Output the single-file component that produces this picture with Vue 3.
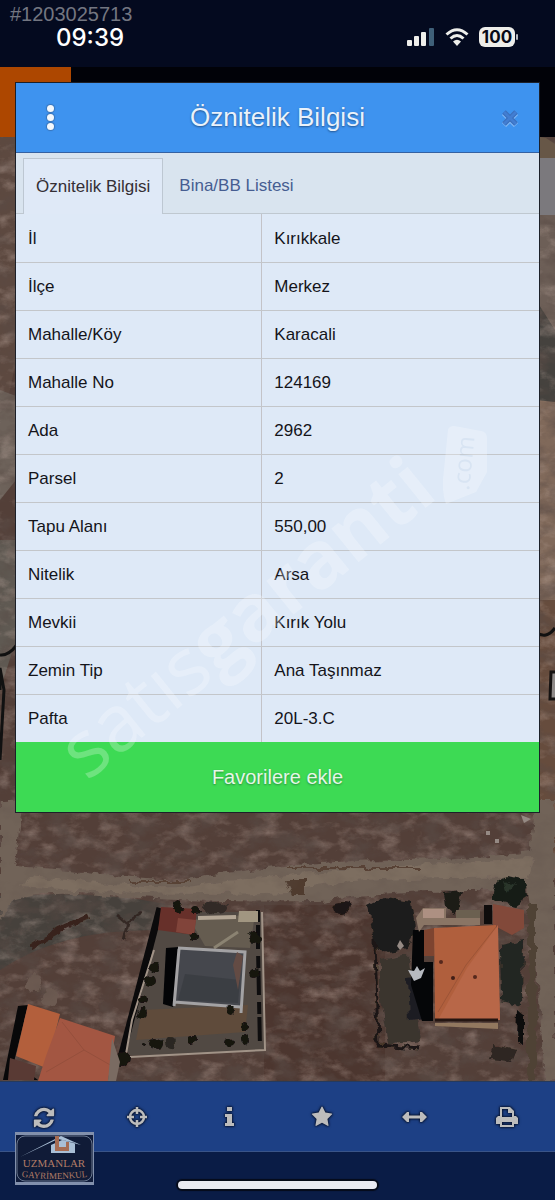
<template>
  <div class="screen">
    <header class="status-bar">
      <div class="status-left">
        <span class="listing-no">#1203025713</span>
        <span class="clock">09:39</span>
      </div>
      <div class="status-icons">
        <svg class="signal" viewBox="0 0 28 18" aria-hidden="true">
          <rect x="0" y="12" width="5" height="6" rx="1" />
          <rect x="7" y="8" width="5" height="10" rx="1" />
          <rect x="14" y="4" width="5" height="14" rx="1" />
          <rect x="22" y="0" width="5" height="18" rx="1" fill="#3f6079" />
        </svg>
        <svg class="wifi" viewBox="0 0 24 18" aria-hidden="true">
          <path d="M1.500 6.500Q12-3 22.500 6.500M5.500 10.500Q12 4.500 18.500 10.500" fill="none" stroke="#eeeeea" stroke-width="3" />
          <path d="M8 13.500Q12 10 16 13.500L12 18Z" />
        </svg>
        <span class="battery">100</span>
      </div>
    </header>
    <div class="app-strip"><div class="brand"></div></div>

    <main class="map">
      <svg class="aerial" viewBox="0 137 555 944" preserveAspectRatio="xMidYMax slice" aria-hidden="true">
        <defs>
          <filter id="dark-grain" x="0" y="0" width="100%" height="100%">
            <feTurbulence type="fractalNoise" baseFrequency="0.04 0.06" numOctaves="5" seed="7" />
            <feColorMatrix values="0 0 0 0 0.1  0 0 0 0 0.07  0 0 0 0 0.06  2.6 0 0 0 -1.1" />
          </filter>
          <filter id="light-grain" x="0" y="0" width="100%" height="100%">
            <feTurbulence type="fractalNoise" baseFrequency="0.05 0.08" numOctaves="5" seed="21" />
            <feColorMatrix values="0 0 0 0 0.54  0 0 0 0 0.42  0 0 0 0 0.37  0 2.4 0 0 -1.1" />
          </filter>
          <filter id="rough" x="-10%" y="-10%" width="120%" height="120%">
            <feTurbulence type="fractalNoise" baseFrequency="0.09" numOctaves="3" seed="3" />
            <feDisplacementMap in="SourceGraphic" scale="9" xChannelSelector="R" yChannelSelector="G" />
          </filter>
        </defs>
        <rect y="137" width="555" height="944" fill="#533f38" />
        <path d="M0 137H16V360L0 440Z" fill="#5d4940" />
        <path d="M0 390L16 396V480L0 500Z" fill="#6d625a" />
        <path d="M0 540H16V640L0 690Z" fill="#5f5952" />
        <path d="M536 210H555V350L536 300Z" fill="#6d5f57" />
        <path d="M536 300L555 330V400L536 430Z" fill="#45423e" />
        <path d="M536 400L555 402V600H536Z" fill="#80695a" />
        <path d="M536 600H555V880H536Z" fill="#664c3d" />
        <path d="M0 896Q100 890 165 904L152 930Q60 930 0 970Z" fill="#46413c" />
        <path d="M264 905H385V1081H264Z" fill="#4c362f" />
        <rect y="137" width="555" height="944" filter="url(#light-grain)" opacity=".42" />
        <rect y="137" width="555" height="944" filter="url(#dark-grain)" opacity=".6" />

        <g filter="url(#rough)">
          <path d="M0 800H24L14 866L70 870Q130 878 180 880Q300 860 400 860Q480 858 530 852L536 800H555V1081H545L536 960L528 890Q400 888 320 901Q190 903 110 896Q40 890 14 900L0 920Z" fill="#716359" />
          <path d="M30 876Q130 888 185 886Q330 868 535 858L528 878Q340 876 290 892Q160 898 20 886Z" fill="#7d6e60" />
          <path d="M285 868H420M130 881H190" stroke="#594235" stroke-width="2" />
          <path d="M285 880H305V895H292Z" fill="#4f3b2f" />
          <path d="M30 948Q60 928 90 916" fill="none" stroke="#38241b" stroke-width="6" />
          <path d="M116 915L126 923L142 913M128 923L123 940" fill="none" stroke="#332824" stroke-width="3" />
        </g>
        <g fill="#6c5a51" filter="url(#rough)">
          <circle cx="34" cy="983" r="8" />
          <circle cx="50" cy="998" r="8" />
        </g>
        <rect y="800" width="555" height="281" filter="url(#dark-grain)" opacity=".2" />

        <!-- walled garden with the grey roof -->
        <path d="M159 912L262 912L266 1051L121 1056Z" fill="#514943" />
        <path d="M190 920L255 914L250 948L205 946Z" fill="#655c50" />
        <path d="M142 1010L248 1005L245 1032L136 1040Z" fill="#5f4b3b" />
        <path d="M160 908L122 1054" stroke="#0b0a0b" stroke-width="7" fill="none" />
        <path d="M154 950L132 1020L126 1054M130 1057L265 1050L262 912" stroke="#a19387" stroke-width="2" fill="none" />
        <path d="M258 910V948L260 1048" stroke="#0e0d0e" stroke-width="4" fill="none" stroke-dasharray="12 3 24 7" />
        <path d="M161 907L197 909L194 935L158 930Z" fill="#67302a" />
        <path d="M178 918L196 920L194 935L176 932Z" fill="#81443a" />
        <path d="M198 918L236 917" stroke="#b3a695" stroke-width="4" />
        <path d="M239 911H258V922H238Z" fill="#a19681" />
        <path d="M214 948L238 932" stroke="#8b8372" stroke-width="3" />
        <path d="M166 948L179 947L173 1007L163 1004Z" fill="#030406" />
        <path d="M179 949L245 952L240 1006L174 1002Z" fill="#45474d" />
        <path d="M185 974L240 980L238 1003L178 1000Z" fill="#36383d" opacity=".6" />
        <path d="M178 948L245 952L241 1013M179 949L174 1006M174 1002L241 1007" stroke="#a3a2a4" stroke-width="3" fill="none" />
        <path d="M237 952L243 956L238 990L233 965Z" fill="#634b44" />
        <g fill="#15130f" filter="url(#rough)">
          <circle cx="154" cy="968" r="5" />
          <circle cx="150" cy="981" r="6" />
          <circle cx="144" cy="999" r="4" />
          <circle cx="142" cy="1013" r="5" />
          <circle cx="193" cy="937" r="4" />
          <circle cx="178" cy="907" r="6" />
          <circle cx="196" cy="910" r="4" />
          <ellipse cx="216" cy="908" rx="13" ry="6" fill="#302a25" />
          <circle cx="254" cy="937" r="6" />
          <circle cx="254" cy="973" r="5" />
          <circle cx="246" cy="1026" r="4" />
          <circle cx="245" cy="1040" r="5" />
          <circle cx="230" cy="1042" r="5" />
          <circle cx="156" cy="1044" r="6" />
          <circle cx="170" cy="1043" r="5" fill="#2c2820" />
          <circle cx="191" cy="1040" r="4" />
          <circle cx="144" cy="1045" r="3" />
          <circle cx="230" cy="1011" r="5" />
          <circle cx="122" cy="1059" r="7" />
        </g>

        <!-- orange roof, lower left -->
        <path d="M18 1006L28 1005L14 1062L38 1080H3Z" fill="#080809" />
        <path d="M28 1004L60 1014L46 1068L16 1056Z" fill="#b35f3c" />
        <path d="M60 1018L115 1036L108 1081H38L46 1056Z" fill="#a35642" />
        <path d="M46 1072L84 1050L112 1066M84 1050L62 1022" stroke="#954f3c" fill="none" />
        <path d="M10 1058L36 1066L34 1080H8Z" fill="#593a34" />
        <path d="M112 1038L120 1062L116 1081H108Z" fill="#7a6b62" />

        <!-- house on the right and its trees -->
        <g filter="url(#rough)">
          <path d="M368 906L384 898L412 902L416 930L408 948L388 952L376 946L372 925Z" fill="#1c1c1a" />
          <path d="M380 960L408 955L420 1040L388 1045L380 1000Z" fill="#3b342f" />
          <path d="M375 940L378 1045L420 1048" fill="none" stroke="#1f1815" stroke-width="3" />
          <path d="M408 978L420 976L424 1018L410 1020Z" fill="#1c1d24" />
          <ellipse cx="342" cy="908" rx="9" ry="6" fill="#1d1513" />
          <path d="M444 892L462 890L456 916L446 908Z" fill="#1f1b18" />
          <path d="M494 884L508 876L524 880L528 896L514 905L492 900Z" fill="#161b16" />
          <path d="M504 880L514 884L508 894Z" fill="#29352a" />
          <path d="M500 945L523 940L522 1005L501 1000Z" fill="#232521" />
          <path d="M517 1010L523 1015V1045L516 1040Z" fill="#090a0b" />
          <path d="M495 1045L515 1050L510 1062L490 1060Z" fill="#2d2521" />
          <path d="M532 905V1080" stroke="#4f4335" stroke-width="8" />
        </g>
        <path d="M413 930H424V962H433V1021H422L411 985Z" fill="#050608" />
        <path d="M416 918L423 908H446V918H480V925H424L419 932Z" fill="#8a7565" />
        <path d="M423 909H444V918H423Z" fill="#ad9082" />
        <path d="M456 910H480V918H456Z" fill="#6b6050" />
        <path d="M484 905H492V924H484Z" fill="#0f0c0c" />
        <path d="M493 904L524 910V928L512 935L493 925Z" fill="#82493a" />
        <path d="M424 930L434 928V956H424Z" fill="#7e4430" />
        <path d="M434 928L496 925L500 1020L435 1021Z" fill="#b05f3d" />
        <path d="M498 925L500 1020H438L467 968Z" fill="#b86748" />
        <path d="M496 927L466 965L438 1012" stroke="#9c5437" fill="none" />
        <path d="M435 1020H498" stroke="#241511" stroke-width="3" />
        <path d="M435 1023H498V1029L435 1026Z" fill="#92785f" />
        <circle cx="453" cy="978" r="2" fill="#401e17" />
        <circle cx="475" cy="977" r="2" fill="#55281c" />
        <circle cx="441" cy="962" r="2" fill="#55281c" />
        <path d="M408 970L414 971L417 966L420 971L425 968L421 978L414 981Z" fill="#b7bac0" />
        <path d="M397 946L400 940L404 946L400 950ZM486 831H490V835H486ZM495 839H499V843H495ZM521 815L531 819L524 823Z" fill="#958a84" />

        <path d="M536 632Q546 640 555 628M0 655Q8 656 16 646M0 690V668L4 690L0 760" fill="none" stroke="#111" stroke-width="3" />
        <path d="M551 672H558V699H550Z" fill="#8f8a88" stroke="#151211" stroke-width="3" />
        <path d="M540 137L546 138L555 144V158H540Z" fill="#675747" />
        <path d="M540 158H555V215H540Z" fill="#7b797d" />
      </svg>
    </main>

    <nav class="toolbar" aria-label="Harita araçları">
      <button v-for="tool in tools" :key="tool.name" type="button" :aria-label="tool.name">
        <svg :viewBox="tool.box" aria-hidden="true">
          <path v-for="d in tool.fills" :key="d" :d="d" fill="currentColor" fill-rule="evenodd" />
          <path v-for="d in tool.lines" :key="d" :d="d" fill="none" stroke="currentColor" stroke-width="2.500" />
        </svg>
      </button>
    </nav>
    <footer class="home-area">
      <div class="home-indicator"></div>
    </footer>

    <section class="dialog" role="dialog" aria-labelledby="dialog-title">
      <div class="dialog-header">
        <button type="button" class="menu" aria-label="Menü">
          <i></i><i></i><i></i>
        </button>
        <h1 id="dialog-title">Öznitelik Bilgisi</h1>
        <button type="button" class="close" aria-label="Kapat">
          <svg viewBox="0 0 18 18" aria-hidden="true">
            <path d="M3 3L15 15M15 3L3 15" stroke="#7cb5f5" stroke-width="6" transform="translate(0 1)" />
            <path d="M3 3L15 15M15 3L3 15" stroke="#376dbb" stroke-width="5" />
            <path d="M3 3L15 15M15 3L3 15" stroke="#427ed2" stroke-width="3" />
          </svg>
        </button>
      </div>
      <div class="tabs" role="tablist">
        <button
          v-for="(tab, i) in tabs"
          :key="tab"
          type="button"
          role="tab"
          :aria-selected="activeTab === i"
          :class="{ active: activeTab === i }"
          @click="activeTab = i"
        >{{ tab }}</button>
      </div>
      <table>
        <tbody>
          <tr v-for="row in rows" :key="row.label">
            <th scope="row">{{ row.label }}</th>
            <td>{{ row.value }}</td>
          </tr>
        </tbody>
      </table>
      <button type="button" class="favorite">Favorilere ekle</button>

      <svg class="watermark" viewBox="0 0 440 370" aria-hidden="true">
        <g transform="translate(20 360) rotate(-39)" fill="#fff">
          <text class="mark"><tspan>satıs</tspan><tspan class="mark-bold">garanti</tspan></text>
        </g>
        <path d="M352 8Q353 4 358 4L385 9Q391 10 391 16V50L380 70L350 82Q345 68 348 48Z" fill="#fff" transform="translate(29 0)" />
        <text class="mark-com" transform="translate(402 69) rotate(-84)">.com</text>
      </svg>
    </section>

    <svg class="agency" viewBox="0 0 79 53" role="img" aria-label="Uzmanlar Gayrimenkul">
      <rect width="79" height="53" fill="#8290ac" />
      <rect x="1" y="3" width="77" height="47" fill="#101c3b" />
      <rect x="2" y="4" width="75" height="45" rx="8" fill="#101b37" stroke="#69778f" />
      <path d="M5 25L46 4L66 13L47 8L36 13V21H60V11L43 7Z" fill="#a9bed5" />
      <path d="M40 4V19H54V10H51V15H44V4Z" fill="#a66b52" />
      <text x="39" y="35" text-anchor="middle" class="agency-name">UZMANLAR</text>
      <path id="agency-arc" d="M2 44Q39 50 77 44" fill="none" />
      <text class="agency-sub" text-anchor="middle"><textPath href="#agency-arc" startOffset="50%">GAYRİMENKUL</textPath></text>
    </svg>
  </div>
</template>

<script setup>
import { ref } from 'vue';

const activeTab = ref(0);
const tabs = ['Öznitelik Bilgisi', 'Bina/BB Listesi'];

const rows = [
  { label: 'İl', value: 'Kırıkkale' },
  { label: 'İlçe', value: 'Merkez' },
  { label: 'Mahalle/Köy', value: 'Karacali' },
  { label: 'Mahalle No', value: '124169' },
  { label: 'Ada', value: '2962' },
  { label: 'Parsel', value: '2' },
  { label: 'Tapu Alanı', value: '550,00' },
  { label: 'Nitelik', value: 'Arsa' },
  { label: 'Mevkii', value: 'Kırık Yolu' },
  { label: 'Zemin Tip', value: 'Ana Taşınmaz' },
  { label: 'Pafta', value: '20L-3.C' },
];

const tools = [
  {
    name: 'Yenile',
    box: '-64 -128 1664 1664',
    fills: [
      'M1511 928q0 5-1 7-64 268-268 434.500t-478 166.500q-146 0-282.500-55t-243.500-157l-129 129q-19 19-45 19t-45-19-19-45v-448q0-26 19-45t45-19h448q26 0 45 19t19 45-19 45l-137 137q71 66 161 102t187 36q134 0 250-65t186-179q11-17 53-117 8-23 30-23h192q13 0 22.500 9.500t9.500 22.500zm25-800v448q0 26-19 45t-45 19h-448q-26 0-45-19t-19-45 19-45l138-138q-148-137-349-137-134 0-250 65t-186 179q-11 17-53 117-8 23-30 23h-199q-13 0-22.500-9.500t-9.500-22.500v-7q65-268 270-434.500t480-166.500q146 0 284 55.500t245 156.500l130-129q19-19 45-19t45 19 19 45z',
    ],
  },
  {
    name: 'Konum',
    box: '0 0 22 22',
    lines: ['M11 4A7 7 0 1 1 11 18A7 7 0 1 1 11 4M11 1V8M11 14V21M1 11H8M14 11H21'],
  },
  {
    name: 'Bilgi',
    box: '0 0 22 22',
    fills: ['M9 1H14V5H9ZM7 8H14V17H16V20H7V17H9V11H7Z'],
  },
  {
    name: 'Favoriler',
    box: '0 0 1792 1792',
    fills: [
      'M1728 647q0 22-26 48l-363 354 86 500q1 7 1 20 0 21-10.500 35.500t-30.500 14.500q-19 0-40-12l-449-236-449 236q-22 12-40 12-21 0-31.500-14.500t-10.500-35.500q0-6 2-20l86-500-364-354q-25-27-25-48 0-37 56-46l502-73 225-455q19-41 49-41t49 41l225 455 502 73q56 9 56 46z',
    ],
  },
  {
    name: 'Ölçüm',
    box: '0 0 22 22',
    fills: ['M-1 11L4 6H6V9.500H17V6H19L24 11L19 16H17V12.500H6V16H4Z'],
  },
  {
    name: 'Yazdır',
    box: '0 0 22 22',
    fills: ['M4 1H14L18 5V10H20L22 12V18H18V21H4V18H0V12L2 10H4ZM6 3V11H16V7H12V3ZM6 16V19H16V16Z'],
  },
];
</script>

<style>
body {
  margin: 0;
  background: #050a1e;
}
</style>

<style scoped>
.screen {
  position: relative;
  display: flex;
  flex-direction: column;
  min-height: 100vh;
  font-family: "Liberation Sans", Arial, sans-serif;
  overflow: hidden;
}

button {
  border: 0;
  padding: 0;
  background: none;
  font-family: inherit;
  cursor: pointer;
}

.status-bar {
  display: flex;
  justify-content: space-between;
  height: 67px;
  background: #040a1f;
}

.status-left {
  display: flex;
  flex-direction: column;
  padding: 4px 0 0 10px;
}

.listing-no {
  color: #737681;
  font-size: 20px;
  line-height: 20px;
}

.clock {
  padding-left: 46px;
  color: #fff;
  font-family: Inter, sans-serif;
  font-size: 24px;
  font-weight: 500;
  line-height: 28px;
}

.status-icons {
  display: flex;
  align-items: center;
  gap: 10px;
  height: 74px;
  padding-right: 40px;
  fill: #eeeeea;
}

.signal {
  width: 28px;
  height: 18px;
}

.wifi {
  width: 24px;
  height: 18px;
}

.battery {
  position: relative;
  width: 36px;
  border-radius: 6px;
  background: #eeeeea;
  color: #080b18;
  font-family: Inter, sans-serif;
  font-size: 17px;
  font-weight: 700;
  line-height: 20px;
  text-align: center;
}

.battery::after {
  content: "";
  position: absolute;
  top: 7px;
  right: -3px;
  width: 2px;
  height: 6px;
  border-radius: 1px;
  background: #b8bac0;
}

.app-strip {
  height: 70px;
  background: #010208;
}

.brand {
  width: 71px;
  height: 70px;
  background: #ad4700;
}

.map {
  position: relative;
  flex: 1;
  min-height: 944px;
}

.aerial {
  position: absolute;
  inset: 0;
  width: 100%;
  height: 100%;
}

.toolbar {
  display: grid;
  grid-template-columns: repeat(6, 1fr);
  height: 69px;
  border-top: 1px solid #263a5c;
  border-bottom: 1px solid #3a5488;
  background: #1d4085;
}

.toolbar button {
  display: flex;
  align-items: center;
  justify-content: center;
  padding-right: 4px;
  color: #bcbcbc;
}

.toolbar svg {
  width: 22px;
  height: 22px;
  overflow: visible;
  filter: drop-shadow(0 0 1px #07122c) drop-shadow(0 0 1px #07122c);
}

.home-area {
  display: flex;
  justify-content: center;
  height: 48px;
  background: #0a1c46;
}

.home-indicator {
  width: 36%;
  height: 8px;
  margin-top: 29px;
  border-radius: 4px;
  background: #e9eaf2;
  box-shadow: 0 0 1px 2px #050a18;
}

.dialog {
  position: absolute;
  top: 82px;
  left: 15px;
  right: 15px;
  border: 1px solid #1c2029;
  background: #dee9f7;
}

.dialog-header {
  display: grid;
  grid-template-columns: 68px 1fr 58px;
  align-items: center;
  height: 69px;
  border-bottom: 1px solid #3461a2;
  background: #3e93ef;
}

.dialog-header h1 {
  margin: 0;
  padding-right: 10px;
  color: #eaf2fb;
  font-size: 26px;
  font-weight: 400;
  text-align: center;
  text-shadow: 0 1px 2px #24558f;
}

.menu {
  display: flex;
  flex-direction: column;
  align-items: center;
  gap: 2px;
}

.menu i {
  width: 7px;
  height: 7px;
  border-radius: 50%;
  background: #f3f8fd;
  box-shadow: 0 0 1px 1px #3874b9;
}

.close svg {
  display: block;
  width: 18px;
  height: 18px;
  margin: 0 auto;
}

.tabs {
  display: flex;
  align-items: flex-end;
  height: 60px;
  padding-left: 7px;
  border-bottom: 1px solid #bfc8d0;
  background: #d9e4ef;
}

.tabs button {
  height: 56px;
  margin-bottom: -1px;
  padding: 0 16px;
  color: #465d91;
  font-size: 17px;
}

.tabs .active {
  padding: 0 12px;
  border: 1px solid #bdc7d2;
  border-bottom: 0;
  background: #dfe9f7;
  color: #342f35;
}

table {
  width: 100%;
  border-collapse: collapse;
  table-layout: fixed;
  color: #14141a;
  font-size: 17px;
}

th,
td {
  box-sizing: border-box;
  height: 48px;
  padding: 2px 12px 0;
  border-bottom: 1px solid #c3c6ca;
  font-weight: 400;
  text-align: left;
}

th {
  width: 47%;
  border-right: 1px solid #c3c3c8;
}

tr:last-child th,
tr:last-child td {
  border-bottom: 0;
}

.favorite {
  display: block;
  width: 100%;
  height: 70px;
  background: #3dda54;
  color: #e5f6e7;
  font-size: 20px;
  text-shadow: 0 1px 2px #288e39;
}

/* faint diagonal mark across the table */
.watermark {
  position: absolute;
  right: 32px;
  bottom: 20px;
  width: 440px;
  height: 370px;
  overflow: visible;
  opacity: .25;
  pointer-events: none;
}

.mark {
  font-family: "Open Sans", sans-serif;
  font-size: 79px;
}

.mark-bold {
  font-weight: 700;
}

.mark-com {
  fill: #c9d7e8;
  font-family: "Open Sans", sans-serif;
  font-size: 24px;
}

.agency {
  position: absolute;
  left: 15px;
  bottom: 15px;
  width: 79px;
  height: 53px;
}

.agency-name,
.agency-sub {
  fill: #b27c66;
  font-family: "Liberation Serif", serif;
  font-size: 11px;
}

.agency-sub {
  font-size: 9px;
}
</style>
